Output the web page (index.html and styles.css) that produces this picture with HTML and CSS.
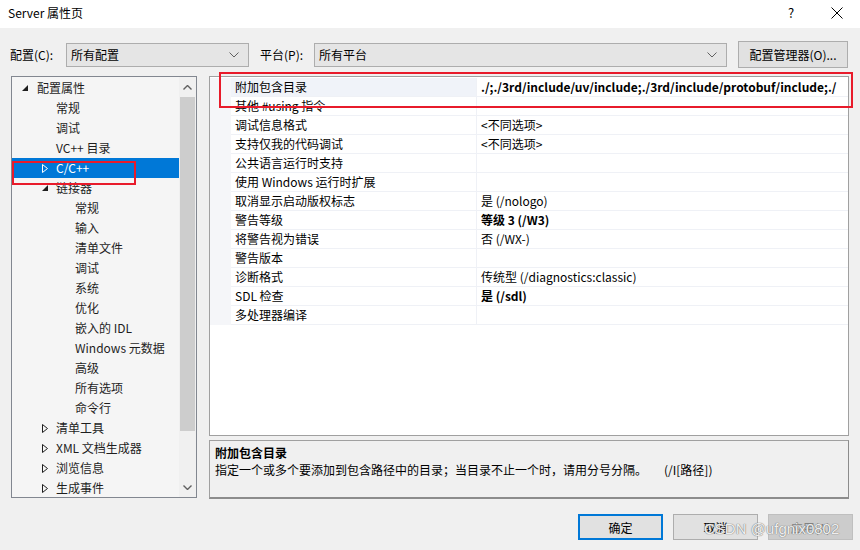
FILE: index.html
```html
<html>
<head>
<meta http-equiv="Content-Type" content="text/html;charset=UTF-8">
<title>Server 属性页</title>
<link rel="stylesheet" href="styles.css">
</head>
<body>
<div class="window">

<div class="titlebar">
  <span class="title">Server 属性页</span>
  <span class="help">?</span>
  <span class="close"><svg width="12" height="12" viewBox="0 0 12 12"><path d="M0.5 0.5 L11.5 11.5 M11.5 0.5 L0.5 11.5" stroke="#000" stroke-width="1" fill="none"/></svg></span>
</div>

<div class="config-row">
  <span class="cfg-label">配置(C):</span>
  <div class="combo combo-config"><span>所有配置</span><svg width="10" height="6" viewBox="0 0 10 6"><path d="M0.5 0.5 L5 5 L9.5 0.5" stroke="#606060" fill="none"/></svg></div>
  <span class="cfg-label plat-label">平台(P):</span>
  <div class="combo combo-platform"><span>所有平台</span><svg width="10" height="6" viewBox="0 0 10 6"><path d="M0.5 0.5 L5 5 L9.5 0.5" stroke="#606060" fill="none"/></svg></div>
  <div class="btn btn-manager">配置管理器(O)...</div>
</div>

<div class="main">
  <div class="tree">
    <div class="tree-list">
      <div class="node lv1"><span class="arrow"><svg width="6" height="6" viewBox="0 0 6 6"><path d="M6 0 L6 6 L0 6 Z" fill="#1e1e1e"/></svg></span>配置属性</div>
      <div class="node lv2">常规</div>
      <div class="node lv2">调试</div>
      <div class="node lv2">VC++ 目录</div>
      <div class="node lv2 has-arrow selected"><span class="arrow"><svg width="6" height="9" viewBox="0 0 6 9"><path d="M0.5 0.5 L5.5 4.5 L0.5 8.5 Z" stroke="#fff" fill="none"/></svg></span>C/C++</div>
      <div class="node lv2 has-arrow"><span class="arrow"><svg width="6" height="6" viewBox="0 0 6 6"><path d="M6 0 L6 6 L0 6 Z" fill="#1e1e1e"/></svg></span>链接器</div>
      <div class="node lv3">常规</div>
      <div class="node lv3">输入</div>
      <div class="node lv3">清单文件</div>
      <div class="node lv3">调试</div>
      <div class="node lv3">系统</div>
      <div class="node lv3">优化</div>
      <div class="node lv3">嵌入的 IDL</div>
      <div class="node lv3">Windows 元数据</div>
      <div class="node lv3">高级</div>
      <div class="node lv3">所有选项</div>
      <div class="node lv3">命令行</div>
      <div class="node lv2 has-arrow"><span class="arrow"><svg width="6" height="9" viewBox="0 0 6 9"><path d="M0.5 0.5 L5.5 4.5 L0.5 8.5 Z" stroke="#1e1e1e" fill="none"/></svg></span>清单工具</div>
      <div class="node lv2 has-arrow"><span class="arrow"><svg width="6" height="9" viewBox="0 0 6 9"><path d="M0.5 0.5 L5.5 4.5 L0.5 8.5 Z" stroke="#1e1e1e" fill="none"/></svg></span>XML 文档生成器</div>
      <div class="node lv2 has-arrow"><span class="arrow"><svg width="6" height="9" viewBox="0 0 6 9"><path d="M0.5 0.5 L5.5 4.5 L0.5 8.5 Z" stroke="#1e1e1e" fill="none"/></svg></span>浏览信息</div>
      <div class="node lv2 has-arrow"><span class="arrow"><svg width="6" height="9" viewBox="0 0 6 9"><path d="M0.5 0.5 L5.5 4.5 L0.5 8.5 Z" stroke="#1e1e1e" fill="none"/></svg></span>生成事件</div>
    </div>
    <div class="vscroll">
      <div class="sb-btn"><svg width="9" height="5" viewBox="0 0 9 5"><path d="M0.5 4.5 L4.5 0.5 L8.5 4.5" stroke="#606060" stroke-width="1.4" fill="none"/></svg></div>
      <div class="sb-track"><div class="sb-thumb"></div></div>
      <div class="sb-btn"><svg width="9" height="5" viewBox="0 0 9 5"><path d="M0.5 0.5 L4.5 4.5 L8.5 0.5" stroke="#606060" stroke-width="1.4" fill="none"/></svg></div>
    </div>
  </div>

  <div class="right">
    <div class="grid">
      <div class="row current"><div class="name">附加包含目录</div><div class="value bold">./;./3rd/include/uv/include;./3rd/include/protobuf/include;./</div></div>
      <div class="row"><div class="name">其他 #using 指令</div><div class="value"></div></div>
      <div class="row"><div class="name">调试信息格式</div><div class="value">&lt;不同选项&gt;</div></div>
      <div class="row"><div class="name">支持仅我的代码调试</div><div class="value">&lt;不同选项&gt;</div></div>
      <div class="row"><div class="name">公共语言运行时支持</div><div class="value"></div></div>
      <div class="row"><div class="name">使用 Windows 运行时扩展</div><div class="value"></div></div>
      <div class="row"><div class="name">取消显示启动版权标志</div><div class="value">是 (/nologo)</div></div>
      <div class="row"><div class="name">警告等级</div><div class="value bold">等级 3 (/W3)</div></div>
      <div class="row"><div class="name">将警告视为错误</div><div class="value">否 (/WX-)</div></div>
      <div class="row"><div class="name">警告版本</div><div class="value"></div></div>
      <div class="row"><div class="name">诊断格式</div><div class="value">传统型 (/diagnostics:classic)</div></div>
      <div class="row"><div class="name">SDL 检查</div><div class="value bold">是 (/sdl)</div></div>
      <div class="row"><div class="name">多处理器编译</div><div class="value"></div></div>
    </div>
    <div class="desc">
      <div class="desc-title">附加包含目录</div>
      <div class="desc-text">指定一个或多个要添加到包含路径中的目录；当目录不止一个时，请用分号分隔。<span class="switch">(/I[路径])</span></div>
    </div>
  </div>
</div>

<div class="buttons">
  <div class="btn dlg-btn default">确定</div>
  <div class="btn dlg-btn">取消</div>
  <div class="btn dlg-btn disabled">应用(A)</div>
</div>

<div class="mark mark-path"></div>
<div class="mark mark-cpp"></div>
<div class="watermark">CSDN @ufgnix0802</div>

</div>
</body>
</html>
```

FILE: styles.css
```css
body {
    margin: 0px;
    padding: 0px;
    background-color: #f0f0f0;
    font-family: "Noto Sans CJK SC", "Noto Sans", sans-serif;
    font-size: 12px;
    color: #000;
}

.window {
    position: relative;
    width: 860px;
    height: 550px;
    overflow: hidden;
    display: flex;
    flex-direction: column;
}

/* title bar */
.titlebar {
    height: 28px;
    background-color: #fff;
    display: flex;
    align-items: center;
    padding-left: 8px;
    flex-shrink: 0;
}
.title { flex: 1; font-size: 12px; padding-bottom: 3px; }
.help { width: 46px; font-size: 13px; padding-bottom: 3px; text-align: center; }
.close { width: 46px; display: flex; justify-content: center; padding-bottom: 2px; }

/* configuration row */
.config-row {
    height: 27px;
    margin-top: 13px;
    display: flex;
    align-items: center;
    padding-left: 10px;
    flex-shrink: 0;
}
.cfg-label { width: 56px; }
.plat-label { margin-left: 11px; width: 54px; }
.combo {
    height: 24px;
    border: 1px solid #adadad;
    background-color: #e5e5e5;
    display: flex;
    align-items: center;
    justify-content: space-between;
    padding: 0px 9px 0px 4px;
    box-sizing: border-box;
}
.combo-config { width: 183px; }
.combo-platform { width: 413px; }

.btn {
    border: 1px solid #adadad;
    background-color: #e1e1e1;
    display: flex;
    align-items: center;
    justify-content: center;
    box-sizing: border-box;
}
.btn-manager {
    width: 110px;
    height: 27px;
    margin-left: 11px;
}

/* main area */
.main {
    display: flex;
    margin-top: 8px;
    padding-left: 11px;
    gap: 12px;
    flex-shrink: 0;
}

.tree {
    width: 186px;
    height: 422px;
    border: 1px solid #828790;
    box-sizing: border-box;
    background-color: #f5f5f5;
    display: flex;
    overflow: hidden;
    flex-shrink: 0;
}
.tree-list {
    flex: 1;
    padding-top: 1px;
}
.node {
    height: 20px;
    line-height: 20px;
    white-space: nowrap;
    display: flex;
    align-items: center;
    color: #1e1e1e;
    box-sizing: border-box;
}
.node .arrow { display: inline-flex; align-items: center; }
.lv1 { padding-left: 25px; }
.lv1 .arrow { margin-left: -15px; width: 15px; }
.lv2 { padding-left: 44px; }
.lv2 .arrow { margin-left: -14px; width: 14px; }
.lv3 { padding-left: 63px; }
.selected { background-color: #0078d7; color: #fff; }

.vscroll {
    width: 17px;
    background-color: #f0f0f0;
    display: flex;
    flex-direction: column;
}
.sb-btn {
    height: 20px;
    display: flex;
    align-items: center;
    justify-content: center;
}
.sb-track { flex: 1; padding: 0px 1px; }
.sb-thumb {
    background-color: #cdcdcd;
    height: 334px;
}

/* property grid */
.right {
    width: 640px;
    display: flex;
    flex-direction: column;
    gap: 4px;
    flex-shrink: 0;
}
.grid {
    height: 360px;
    border: 1px solid #a0a0a0;
    box-sizing: border-box;
    background-color: #fff;
    padding-top: 1px;
}
.row {
    height: 19px;
    display: flex;
}
.row::before {
    content: "";
    width: 21px;
    flex-shrink: 0;
    background-color: #f5f6f9;
}
.row .name {
    width: 246px;
    flex-shrink: 0;
    padding-left: 4px;
    line-height: 18px;
    white-space: nowrap;
    border-right: 1px solid #eff1f6;
    border-bottom: 1px solid #eff1f6;
    box-sizing: border-box;
}
.row .value {
    flex: 1;
    min-width: 0;
    padding-left: 4px;
    line-height: 18px;
    white-space: nowrap;
    overflow: hidden;
    border-bottom: 1px solid #eff1f6;
    box-sizing: border-box;
}
.row.current .name { background-color: #f0f3f9; }
.bold { font-weight: bold; }

.desc {
    height: 59px;
    border: 1px solid #a0a0a0;
    border-right-color: #8c8c8c;
    border-bottom: 2px solid #8c8c8c;
    box-sizing: border-box;
    padding: 4px 0px 0px 5px;
}
.desc-title { font-weight: bold; line-height: 16px; }
.desc-text { line-height: 18px; white-space: nowrap; }
.switch { margin-left: 17px; }

/* dialog buttons */
.buttons {
    display: flex;
    justify-content: flex-end;
    gap: 10px;
    margin-top: 15px;
    padding-right: 7px;
}
.dlg-btn { width: 85px; height: 26px; }
.default { border: 2px solid #0078d7; }
.disabled { background-color: #cccccc; border-color: #bfbfbf; color: #838383; }

/* annotation boxes drawn over the screenshot */
.mark {
    position: absolute;
    border: 2px solid #e81b2b;
    box-sizing: border-box;
}
.mark-path { left: 219px; top: 72px; width: 634px; height: 36px; }
.mark-cpp { left: 12px; top: 161px; width: 124px; height: 24px; }

.watermark {
    position: absolute;
    left: 704px;
    top: 520px;
    font-family: "Liberation Sans", sans-serif;
    font-size: 15px;
    color: rgba(255, 255, 255, 0.9);
    text-shadow: 0px 0px 1px #777, 0px 0px 1px #777;
    white-space: nowrap;
}
```
